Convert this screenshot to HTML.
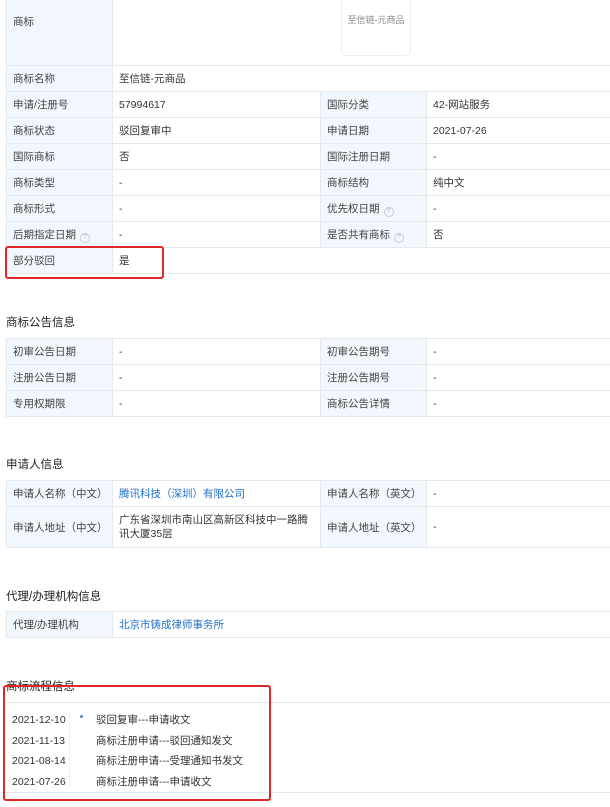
<!DOCTYPE html>
<html><head><meta charset="utf-8"><style>
*{margin:0;padding:0;box-sizing:border-box}
body{width:610px;height:807px;background:#fff;font-family:"Liberation Sans","Noto Sans CJK SC",sans-serif;font-size:10.5px;color:#333;position:relative;overflow:hidden}
.a{position:absolute}
table{position:absolute;left:6px;border-collapse:collapse;width:620px}
td{border:1px solid #e4e9ef;padding:0 6px;height:26px;vertical-align:middle}
td.l{background:#f1f7fd;color:#444;width:106px}
td.v{width:208px}
.h{position:absolute;left:6px;font-size:11.5px;color:#222}
.q{display:inline-block;width:10px;height:10px;border:1px solid #ccd;border-radius:50%;font-size:7px;line-height:8px;text-align:center;color:#bbb;margin-left:4px;vertical-align:-1px}
a{color:#1e6fc8;text-decoration:none}
.red{position:absolute;border:2px solid #e0282a;border-radius:3px}
</style></head><body>
<table style="top:-1px">
<tr><td class="l" style="height:66px;vertical-align:top;padding-top:14px">商标</td><td colspan="3" style="position:relative"><div class="a" style="left:228px;top:-2px;width:70px;height:58px;border:1px solid #eee;border-radius:4px;text-align:center;padding-top:14px;font-size:9px;color:#888">至信链-元商品</div></td></tr>
<tr><td class="l">商标名称</td><td colspan="3">至信链-元商品</td></tr>
<tr><td class="l">申请/注册号</td><td class="v">57994617</td><td class="l">国际分类</td><td>42-网站服务</td></tr>
<tr><td class="l">商标状态</td><td class="v">驳回复审中</td><td class="l">申请日期</td><td>2021-07-26</td></tr>
<tr><td class="l">国际商标</td><td class="v">否</td><td class="l">国际注册日期</td><td>-</td></tr>
<tr><td class="l">商标类型</td><td class="v">-</td><td class="l">商标结构</td><td>纯中文</td></tr>
<tr><td class="l">商标形式</td><td class="v">-</td><td class="l">优先权日期<span class="q">?</span></td><td>-</td></tr>
<tr><td class="l">后期指定日期<span class="q">?</span></td><td class="v">-</td><td class="l">是否共有商标<span class="q">?</span></td><td>否</td></tr>
<tr><td class="l">部分驳回</td><td colspan="3">是</td></tr>
</table>
<div class="red" style="left:5px;top:246px;width:159px;height:33px"></div>
<div class="h" style="top:314px">商标公告信息</div>
<table style="top:338px">
<tr><td class="l">初审公告日期</td><td class="v">-</td><td class="l">初审公告期号</td><td>-</td></tr>
<tr><td class="l">注册公告日期</td><td class="v">-</td><td class="l">注册公告期号</td><td>-</td></tr>
<tr><td class="l">专用权期限</td><td class="v">-</td><td class="l">商标公告详情</td><td>-</td></tr>
</table>
<div class="h" style="top:456px">申请人信息</div>
<table style="top:480px">
<tr><td class="l">申请人名称（中文）</td><td class="v"><a>腾讯科技（深圳）有限公司</a></td><td class="l">申请人名称（英文）</td><td>-</td></tr>
<tr><td class="l" style="height:41px">申请人地址（中文）</td><td class="v" style="line-height:14px">广东省深圳市南山区高新区科技中一路腾讯大厦35层</td><td class="l">申请人地址（英文）</td><td>-</td></tr>
</table>
<div class="h" style="top:588px">代理/办理机构信息</div>
<table style="top:611px">
<tr><td class="l">代理/办理机构</td><td colspan="3"><a>北京市铸成律师事务所</a></td></tr>
</table>
<div class="h" style="top:678px">商标流程信息</div>
<div class="a" style="left:6px;top:702px;width:610px;height:91px;border-top:1px solid #e4e9ef;border-bottom:1px solid #e4e9ef"></div>
<div class="a" style="left:69px;top:710px;width:1px;height:78px;background:#eef2f7"></div>
<div class="a" style="left:12px;top:710px;line-height:20.5px">2021-12-10<br>2021-11-13<br>2021-08-14<br>2021-07-26</div>
<div class="a" style="left:80px;top:715px;width:3px;height:3px;border-radius:50%;background:#4a8ee0"></div>
<div class="a" style="left:96px;top:710px;line-height:20.5px">驳回复审---申请收文<br>商标注册申请---驳回通知发文<br>商标注册申请---受理通知书发文<br>商标注册申请---申请收文</div>
<div class="red" style="left:3px;top:685px;width:268px;height:116px"></div>
</body></html>
